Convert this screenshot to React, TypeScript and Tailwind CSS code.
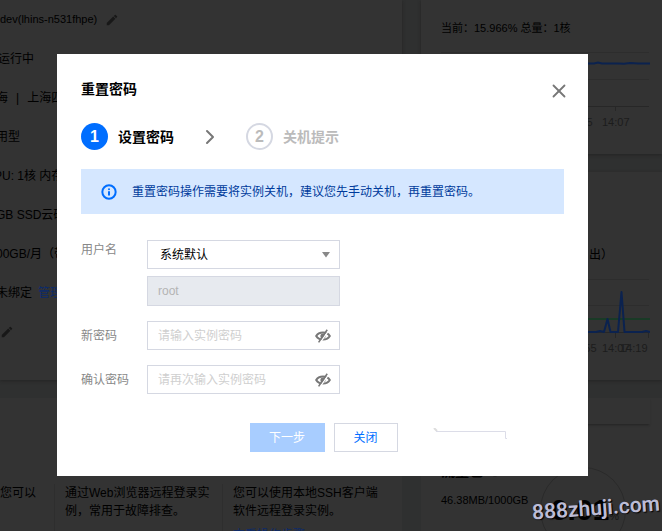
import type { ReactNode } from 'react'
import { X, ChevronRight, Info } from 'lucide-react'
import { MdEdit } from 'react-icons/md'

function EyeOff() {
  return (
    <svg width="16" height="14" viewBox="0 0 16 14" fill="none" aria-hidden="true">
      <path d="M1.2 7C3.8 2.2 12.2 2.2 14.8 7C12.2 11.8 3.8 11.8 1.2 7Z" stroke="#777" strokeWidth="2" />
      <circle cx="8" cy="7" r="2.6" fill="#777" />
      <path d="M5.2 13.6L13.6 1.6" stroke="#fff" strokeWidth="1.4" />
      <path d="M3.6 13.4L12.2 .8" stroke="#777" strokeWidth="1.6" />
    </svg>
  )
}

function InfoRow({ children }: { children?: ReactNode }) {
  return <div className="flex h-[39px] items-center whitespace-pre">{children}</div>
}

function CpuChart() {
  return (
    <svg className="block" width="209" height="80" viewBox="441 50 209 80" aria-hidden="true">
      <path d="M441 52.5H649M441 79.5H649" stroke="#2d2d2d" />
      <path d="M441 106.5H649M615.5 106V111" stroke="#272727" />
      <path
        d="M441 63.5H594L598 62.5L602 63.5H618L624 63.8L630 63L638 63.5H650"
        stroke="#0b224f"
        strokeWidth="2"
        fill="none"
      />
      <g fill="#1c1c1c" fontSize="11">
        <text x="565" y="126">13:55</text>
        <text x="602" y="126">14:07</text>
      </g>
    </svg>
  )
}

function TrafficChart() {
  return (
    <svg className="block" width="209" height="80" viewBox="441 276 209 80" aria-hidden="true">
      <path d="M441 279.5H649M441 305.5H649" stroke="#2d2d2d" />
      <path d="M441 332.5H649M615.5 333V338M648.5 333V338" stroke="#272727" />
      <path d="M441 319H650" stroke="#193a26" strokeWidth="2" />
      <path
        d="M441 332H596L600 331L604 332L607.5 319L610.5 332H618L621.5 292L624.5 332H642L646 331L650 332"
        stroke="#0b224f"
        strokeWidth="2"
        strokeLinejoin="round"
        fill="none"
      />
      <g fill="#1c1c1c" fontSize="11">
        <text x="569" y="352">13:55</text>
        <text x="602" y="352">14:07</text>
        <text x="620" y="352">14:19</text>
      </g>
    </svg>
  )
}

function Dashboard() {
  return (
    <div className="flex h-full gap-[19px]">
      <div className="flex w-[402px] shrink-0 flex-col gap-[18px]">
        <section className="h-[380px] shrink-0 bg-[#333] shadow-[0_1px_3px_#242424]">
          <InfoRow>
            <span className="text-[11px]">dev(lhins-n531fhpe)</span>
            <MdEdit className="ml-2 size-3.5 text-[#181818]" />
          </InfoRow>
          <InfoRow>
            <span className="-ml-0.5">运行中</span>
          </InfoRow>
          <InfoRow>
            <span className="-ml-1">海</span>
            <span className="mx-2">|</span>上海四区
          </InfoRow>
          <InfoRow>
            <span className="-ml-1">用型</span>
          </InfoRow>
          <InfoRow>
            <span className="-ml-1.5">PU: 1核 内存: 2GB</span>
          </InfoRow>
          <InfoRow>
            <span className="-ml-1">GB SSD云硬盘</span>
          </InfoRow>
          <InfoRow>
            <span className="-ml-1">00GB/月（带宽）</span>
          </InfoRow>
          <InfoRow>
            <span className="-ml-1">未绑定</span>
            <a href="#bind" className="ml-1.5 text-[#0b2a6b]">管理密钥</a>
          </InfoRow>
          <InfoRow>
            <MdEdit className="size-3.5 text-[#181818]" />
          </InfoRow>
        </section>

        <section className="flex flex-1 bg-[#333] pt-[86px] leading-[18px]">
          <div className="w-[55px] shrink-0 border-r border-[#2e2e2e]">您可以</div>
          <div className="w-[168px] shrink-0 whitespace-nowrap border-r border-[#2e2e2e] pl-2.5">
            通过Web浏览器远程登录实
            <br />
            例，常用于故障排查。
          </div>
          <div className="whitespace-nowrap pl-2.5">
            您可以使用本地SSH客户端
            <br />
            软件远程登录实例。
            <br />
            <a href="#ssh" className="block pt-1.5 text-[#0b2a6b]">查看操作步骤</a>
          </div>
        </section>
      </div>

      <div className="flex min-w-0 flex-1 flex-col gap-[18px]">
        <section className="h-[154px] shrink-0 bg-[#333] px-5 pt-5 shadow-[0_1px_3px_#242424]">
          <p className="mb-3.5 h-4 whitespace-nowrap text-[11px] leading-4">当前：15.966% 总量：1核</p>
          <CpuChart />
        </section>
        <section className="h-[208px] shrink-0 bg-[#333] px-5 pt-[75px] shadow-[0_1px_3px_#242424]">
          <p className="mb-[13px] h-4 whitespace-nowrap pl-[148px] leading-4">出）</p>
          <TrafficChart />
        </section>
        <section className="flex-1 bg-[#333]">
          <div className="mr-3 h-[26px] shadow-[0_2px_2px_-1px_#242424]" />
          <div className="flex pl-5 pt-[39px]">
            <div className="w-[99px] shrink-0 whitespace-nowrap">
              <h3 className="flex h-4 items-center gap-1.5 text-sm font-bold leading-4">
                流量包
                <Info className="size-3 text-[#181818]" />
              </h3>
              <p className="mt-[13px] text-[11px] leading-4">46.38MB/1000GB</p>
            </div>
            <div className="mt-1 flex size-[86px] shrink-0 items-center justify-center rounded-full border border-[#2a2a2a] pl-1">
              <span className="text-[30px] font-bold leading-none">0.01</span>
              <span className="pt-3 text-[11px] text-[#181818]">%</span>
            </div>
          </div>
        </section>
      </div>
    </div>
  )
}

function PasswordField({ id, label, placeholder }: { id: string; label: string; placeholder: string }) {
  return (
    <div className="mt-[15px] flex items-center">
      <label htmlFor={id} className="w-[66px] shrink-0 text-[#888]">
        {label}
      </label>
      <div className="flex h-[29px] w-[193px] items-center border border-[#d5d8e2] pr-2">
        <input
          id={id}
          type="password"
          placeholder={placeholder}
          className="min-w-0 flex-1 bg-transparent pl-2.5 outline-none placeholder:text-[#cfcfcf]"
        />
        <button type="button" aria-label="显示密码">
          <EyeOff />
        </button>
      </div>
    </div>
  )
}

function ResetPasswordDialog() {
  return (
    <div role="dialog" aria-labelledby="dialog-title" className="relative bg-white px-6 pb-6 pt-[25px]">
      <header className="flex h-5 items-center justify-between">
        <h2 id="dialog-title" className="text-sm font-bold leading-5">重置密码</h2>
        <button type="button" aria-label="关闭窗口" className="-mr-1.5 mt-1">
          <X className="size-[22px] text-[#777]" />
        </button>
      </header>

      <ol className="mt-6 flex items-center text-sm font-bold">
        <li className="flex items-center gap-2.5">
          <span className="flex size-[27px] items-center justify-center rounded-full bg-[#006eff] text-base text-white">
            1
          </span>
          设置密码
        </li>
        <li aria-hidden="true" className="mx-6">
          <ChevronRight className="size-6 text-[#777]" />
        </li>
        <li className="flex items-center gap-2.5 text-[#bbb]">
          <span className="flex size-[27px] items-center justify-center rounded-full border-2 border-[#d5d8e2] text-base">
            2
          </span>
          关机提示
        </li>
      </ol>

      <div className="mt-[19px] flex h-[45px] items-center gap-[15px] bg-[#d5e7ff] pl-5 text-[#003b9c]">
        <Info className="size-4 text-[#006eff]" strokeWidth={3} />
        <p>重置密码操作需要将实例关机，建议您先手动关机，再重置密码。</p>
      </div>

      <form className="mt-[26px]">
        <div className="flex items-start">
          <label htmlFor="username" className="w-[66px] shrink-0 pt-0.5 text-[#888]">
            用户名
          </label>
          <div className="w-[193px]">
            <div className="relative">
              <select
                id="username"
                className="h-[29px] w-full appearance-none border border-[#d5d8e2] bg-white pl-3 text-black outline-none"
              >
                <option>系统默认</option>
              </select>
              <svg className="pointer-events-none absolute right-2.5 top-3" width="8" height="6" viewBox="0 0 8 6" aria-hidden="true">
                <path d="M0 0H8L4 5.5Z" fill="#888" />
              </svg>
            </div>
            <input
              aria-label="登录用户"
              disabled
              value="root"
              className="mt-[7px] block h-[30px] w-full border border-[#d5d8e2] bg-[#e7eaef] pl-2.5 text-[#b4b4b4]"
            />
          </div>
        </div>
        <PasswordField id="password" label="新密码" placeholder="请输入实例密码" />
        <PasswordField id="confirm" label="确认密码" placeholder="请再次输入实例密码" />

        <div className="mt-[29px] flex justify-center gap-[9px] pl-0.5">
          <button type="submit" disabled className="h-[29px] w-[75px] bg-[#a8cdff] text-white">
            下一步
          </button>
          <button type="button" className="h-[29px] w-16 border border-[#d5d8e2] text-[#006eff]">
            关闭
          </button>
        </div>
      </form>

      <svg
        className="absolute bottom-9 right-[81px]"
        width="74"
        height="12"
        viewBox="0 0 74 12"
        fill="none"
        aria-hidden="true"
      >
        <path d="M1 0L4 3" stroke="#ddd" strokeWidth="2" />
        <path d="M3 3.5H72.5V10.5H74" stroke="#dcdde8" />
      </svg>
    </div>
  )
}

export default function App() {
  return (
    <div className="relative h-screen overflow-hidden bg-[#2f3030] font-['Liberation_Sans','Noto_Sans_CJK_SC',sans-serif] text-xs text-black">
      <Dashboard />
      <div className="absolute inset-0 pl-[57px] pr-[74px] pt-[54px]">
        <ResetPasswordDialog />
      </div>
      <span className="absolute bottom-3 right-0.5 -rotate-4 font-['Roboto',sans-serif] text-[21px] font-semibold leading-none text-[#bcbcd6] [text-shadow:1px_1px_1px_#000]">
        888zhuji.com
      </span>
    </div>
  )
}
